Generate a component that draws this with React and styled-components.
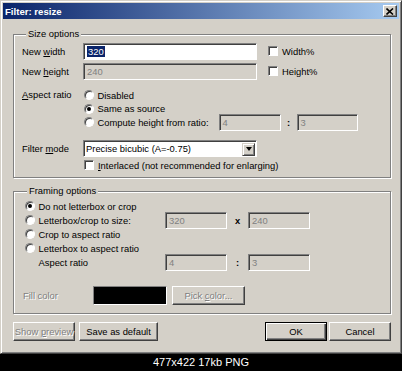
import React from 'react'
import styled, { createGlobalStyle } from 'styled-components'

const GlobalStyle = createGlobalStyle`
  html, body {
    margin: 0;
    padding: 0;
    background: #000;
  }
  body {
    font-family: "Liberation Sans", Arial, sans-serif;
  }
`

const Screen = styled.div`
  width: 402px;
  height: 371px;
  display: flex;
  flex-direction: column;
  background: #000;
`

const Window = styled.div`
  box-sizing: border-box;
  width: 402px;
  height: 354px;
  flex: none;
  background: #d4d0c8;
  border: 1px solid;
  border-color: #d4d0c8 #404040 #404040 #d4d0c8;
  box-shadow: inset 1px 1px #fff, inset -1px -1px #808080;
  padding: 2px;
  display: flex;
  flex-direction: column;
  font-size: 9.4px;
  color: #000;
`

const TitleBar = styled.div`
  height: 16px;
  flex: none;
  display: flex;
  align-items: center;
  justify-content: space-between;
  padding: 0 2px;
  background: linear-gradient(to right, #0a246a, #a6caf0);
`

const Title = styled.span`
  color: #fff;
  font-weight: bold;
  font-size: 9.6px;
`

const CloseButton = styled.div`
  box-sizing: border-box;
  width: 14px;
  height: 12px;
  background: #d4d0c8;
  border: 1px solid;
  border-color: #fff #404040 #404040 #fff;
  box-shadow: inset -1px -1px #808080;
  display: flex;
  align-items: center;
  justify-content: center;
`

const Body = styled.div`
  flex: 1;
  padding: 9px 8px 0 10px;
  display: flex;
  flex-direction: column;
`

const GroupBox = styled.fieldset`
  margin: ${p => p.$mt || 0}px 0 0 0;
  min-width: 0;
  padding: 2px 6px ${p => p.$pb}px ${p => p.$pl}px;
  border: 1px solid #808080;
  box-shadow: 1px 1px 0 #fff, inset 1px 1px 0 #fff;
`

const Legend = styled.legend`
  padding: 0 2px;
  margin-left: 4px;
  line-height: 12px;
  background: #d4d0c8;
`

const Row = styled.div`
  display: flex;
  align-items: ${p => (p.$top ? 'flex-start' : 'center')};
  height: ${p => p.$h}px;
  margin-top: ${p => p.$mt || 0}px;
  padding-left: ${p => p.$pl || 0}px;
`

const Label = styled.span`
  flex: none;
  width: ${p => (p.$w ? `${p.$w}px` : 'auto')};
  line-height: ${p => (p.$lh ? `${p.$lh}px` : 'normal')};
  white-space: pre;
  color: ${p => (p.$disabled ? '#808080' : '#000')};
  text-shadow: ${p => (p.$disabled ? '1px 1px 0 #fff' : 'none')};
`

const Mn = styled.span`
  text-decoration: underline;
`

const TextBox = styled.div`
  box-sizing: border-box;
  flex: none;
  width: ${p => p.$w}px;
  height: 17px;
  padding-left: 3px;
  display: flex;
  align-items: center;
  background: ${p => (p.$disabled ? '#d4d0c8' : '#fff')};
  color: ${p => (p.$disabled ? '#808080' : '#000')};
  border: 1px solid;
  border-color: #808080 #fff #fff #808080;
  box-shadow: inset 1px 1px #404040;
`

const Selected = styled.span`
  background: #0a246a;
  color: #fff;
  padding: 0 1px;
`

const Separator = styled.span`
  flex: none;
  width: ${p => p.$w}px;
  text-align: center;
  font-weight: bold;
`

const Check = styled.span`
  box-sizing: border-box;
  flex: none;
  width: 10px;
  height: 10px;
  margin-left: ${p => p.$ml || 0}px;
  margin-right: 4px;
  background: #fff;
  border: 1px solid;
  border-color: #808080 #fff #fff #808080;
  box-shadow: inset 1px 1px #404040;
`

const Radio = styled.span`
  box-sizing: border-box;
  flex: none;
  width: 10px;
  height: 10px;
  margin-left: ${p => p.$ml || 0}px;
  margin-right: 3.5px;
  border-radius: 50%;
  background: #fff;
  border: 1px solid;
  border-color: #808080 #fff #fff #808080;
  box-shadow: inset 1px 1px #404040;
  display: flex;
  align-items: center;
  justify-content: center;
  &::after {
    content: '';
    width: 4px;
    height: 4px;
    border-radius: 50%;
    background: #000;
    display: ${p => (p.$on ? 'block' : 'none')};
  }
`

const RadioStack = styled.div`
  display: flex;
  flex-direction: column;
`

const Select = styled.div`
  box-sizing: border-box;
  flex: none;
  width: 174px;
  height: 17px;
  padding-left: 2px;
  display: flex;
  align-items: center;
  justify-content: space-between;
  background: #fff;
  border: 1px solid;
  border-color: #808080 #fff #fff #808080;
  box-shadow: inset 1px 1px #404040;
`

const DropButton = styled.span`
  box-sizing: border-box;
  width: 13px;
  height: 13px;
  margin-right: 1px;
  margin-top: 1px;
  background: #d4d0c8;
  border: 1px solid;
  border-color: #d4d0c8 #404040 #404040 #d4d0c8;
  box-shadow: inset 1px 1px #fff, inset -1px -1px #808080;
  display: flex;
  align-items: center;
  justify-content: center;
  &::after {
    content: '';
    border-left: 3.5px solid transparent;
    border-right: 3.5px solid transparent;
    border-top: 4px solid #000;
  }
`

const Swatch = styled.div`
  box-sizing: border-box;
  flex: none;
  width: 74px;
  height: 19px;
  background: #000;
  border: 1px solid;
  border-color: #808080 #fff #fff #808080;
`

const Button = styled.div`
  box-sizing: border-box;
  flex: none;
  width: ${p => p.$w}px;
  height: 19px;
  margin-left: ${p => p.$ml || 0}px;
  display: flex;
  align-items: center;
  justify-content: center;
  background: #d4d0c8;
  border: 1px solid;
  border-color: ${p => (p.$default ? '#000' : '#fff #404040 #404040 #fff')};
  box-shadow: ${p =>
    p.$default
      ? 'inset 1px 1px #fff, inset -1px -1px #404040, inset -2px -2px #808080'
      : 'inset -1px -1px #808080'};
  color: ${p => (p.$disabled ? '#808080' : '#000')};
  text-shadow: ${p => (p.$disabled ? '1px 1px 0 #fff' : 'none')};
  white-space: pre;
`

const ButtonBar = styled.div`
  display: flex;
  justify-content: space-between;
  margin-top: 8px;
`

const ButtonGroup = styled.div`
  display: flex;
`

const Caption = styled.div`
  height: 17px;
  line-height: 17px;
  text-align: center;
  color: #fff;
  font-size: 11px;
`

export default function App() {
  return (
    <Screen>
      <GlobalStyle />
      <Window>
        <TitleBar>
          <Title>Filter: resize</Title>
          <CloseButton>
            <svg width="8" height="7" viewBox="0 0 8 7">
              <path d="M0.5 0.5 L7 6.5 M7 0.5 L0.5 6.5" stroke="#000" strokeWidth="1.6" />
            </svg>
          </CloseButton>
        </TitleBar>

        <Body>
          <GroupBox $pl={8} $pb={5}>
            <Legend>Size options</Legend>
            <Row $h={18}>
              <Label $w={61}>New <Mn>w</Mn>idth</Label>
              <TextBox $w={174}><Selected>320</Selected></TextBox>
              <Check $ml={11} />
              <Label>Width%</Label>
            </Row>
            <Row $h={18} $mt={2}>
              <Label $w={61}>New <Mn>h</Mn>eight</Label>
              <TextBox $w={174} $disabled>240</TextBox>
              <Check $ml={11} />
              <Label>Height%</Label>
            </Row>
            <Row $h={41} $mt={8} $top>
              <Label $w={61} $lh={14}><Mn>A</Mn>spect ratio</Label>
              <RadioStack>
                <Row $h={14}>
                  <Radio $ml={1} />
                  <Label>Disabled</Label>
                </Row>
                <Row $h={13}>
                  <Radio $ml={1} $on />
                  <Label>Same as source</Label>
                </Row>
                <Row $h={14}>
                  <Radio $ml={1} />
                  <Label $w={121}>Compute height from ratio:</Label>
                  <TextBox $w={62} $disabled>4</TextBox>
                  <Separator $w={16}>:</Separator>
                  <TextBox $w={61} $disabled>3</TextBox>
                </Row>
              </RadioStack>
            </Row>
            <Row $h={17} $mt={11}>
              <Label $w={61}>Filter <Mn>m</Mn>ode</Label>
              <Select>
                <span>Precise bicubic (A=-0.75)</span>
                <DropButton />
              </Select>
            </Row>
            <Row $h={14} $mt={1}>
              <Check $ml={62} />
              <Label><Mn>I</Mn>nterlaced (not recommended for enlarging)</Label>
            </Row>
          </GroupBox>

          <GroupBox $mt={7} $pl={9} $pb={8}>
            <Legend>Framing options</Legend>
            <Row $h={14} $pl={2}>
              <Radio $on />
              <Label>Do not letterbox or crop</Label>
            </Row>
            <Row $h={14} $pl={2}>
              <Radio />
              <Label $w={126.5}>Letterbox/crop to size:</Label>
              <TextBox $w={62} $disabled>320</TextBox>
              <Separator $w={21}>x</Separator>
              <TextBox $w={62} $disabled>240</TextBox>
            </Row>
            <Row $h={14} $pl={2}>
              <Radio />
              <Label>Crop to aspect ratio</Label>
            </Row>
            <Row $h={14} $pl={2}>
              <Radio />
              <Label>Letterbox to aspect ratio</Label>
            </Row>
            <Row $h={14} $pl={15.5}>
              <Label $w={126.5}>Aspect ratio</Label>
              <TextBox $w={62} $disabled>4</TextBox>
              <Separator $w={21}>:</Separator>
              <TextBox $w={62} $disabled>3</TextBox>
            </Row>
            <Row $h={19} $mt={17}>
              <Label $w={70} $disabled>Fill color</Label>
              <Swatch />
              <Button $w={73} $ml={5} $disabled>
                <span>Pick <Mn>c</Mn>olor...</span>
              </Button>
            </Row>
          </GroupBox>

          <ButtonBar>
            <ButtonGroup>
              <Button $w={62} $disabled>
                <span>Show <Mn>p</Mn>review</span>
              </Button>
              <Button $w={79} $ml={4}>Save as default</Button>
            </ButtonGroup>
            <ButtonGroup>
              <Button $w={62} $default>OK</Button>
              <Button $w={62} $ml={2}>Cancel</Button>
            </ButtonGroup>
          </ButtonBar>
        </Body>
      </Window>
      <Caption>477x422 17kb PNG</Caption>
    </Screen>
  )
}
